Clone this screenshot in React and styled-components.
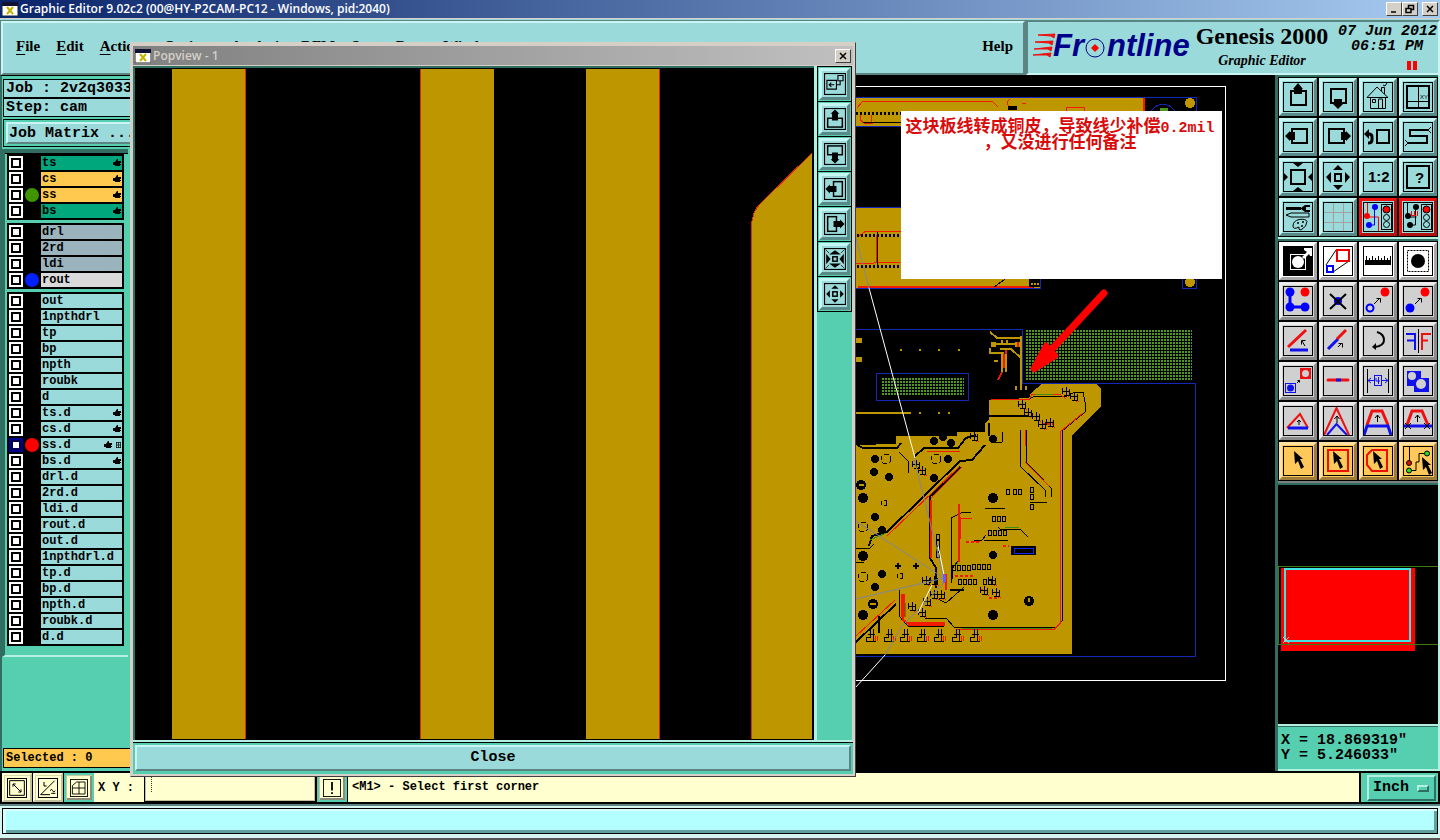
import React from 'react'
import styled, { createGlobalStyle, css } from 'styled-components'

const aqua = '#9bdada'
const teal = '#55cfb0'
const darkTeal = '#2f6e60'
const paleTeal = '#b4f0e2'
const copper = '#bd9600'
const mono = '"Liberation Mono", monospace'
const serif = '"Liberation Serif", serif'
const sans = '"Open Sans", sans-serif'

const GlobalStyle = createGlobalStyle`
  * { box-sizing: border-box; }
  body { margin: 0; background: #000; color: #000; font-family: ${mono}; }
  button, input, select { font: inherit; color: inherit; margin: 0; padding: 0; border-radius: 0; }
  svg { display: block; }
`

/* ---------- icons, all on a 30 x 30 grid ---------- */

const Arrow = ({ d, head }) => (
  <g stroke="#000" strokeWidth="1" fill="none"><path d={d} /><path d={head} /></g>
)

const Cursor = ({ x = 0, y = 0 }) => (
  <polygon transform={`translate(${x} ${y})`} points="11,5 20,13 17,13 21,21 18,23 15,15 12,18" fill="#000" />
)

const Light = () => (
  <g fill="none" stroke="#000">
    <rect x="18.5" y="2.5" width="10" height="25" fill="#9bdada" />
    <circle cx="23.5" cy="7.5" r="3.5" fill="#f00" />
    <circle cx="23.5" cy="15.5" r="3" fill="#9bdada" />
    <circle cx="23.5" cy="22.5" r="3" fill="#9bdada" />
  </g>
)

const box = (x, y, w, h, c = '#000', s = 2) => (
  <rect x={x} y={y} width={w} height={h} fill="none" stroke={c} strokeWidth={s} />
)

const icons = {
  up: <>{box(8, 9, 15, 14)}<path d="M15 1l5 6h-1v5h-8V7h-1z" /></>,
  down: <>{box(8, 7, 15, 14)}<path d="M15 27l-5-5h1v-5h8v5h1z" /></>,
  left: <>{box(9, 7, 15, 14)}<path d="M2 14l5-5v1h5v8H7v1z" /></>,
  right: <>{box(6, 7, 15, 14)}<path d="M28 14l-5-5v1h-5v8h5v1z" /></>,
  home: <g fill="none" stroke="#000"><path d="M4 15.5L14 5l11 10.5zM7.500 15v11.500h15V15M15.500 26v-9h4v9M9.500 17.500h3v3h-3zM18.500 9V5.500h3V12M20 3l2 1 2-3" /></g>,
  xy: <>{box(4, 4, 22, 22)}<path d="M15.500 4v22M4 19.500h22" stroke="#000" fill="none" /><text x="17" y="17" fontSize="6" fontFamily="Liberation Sans">XY</text></>,
  back: <>{box(14, 8, 12, 13)}<path d="M4 12h2q3 0 3 3v3q0 3-4 3" fill="none" stroke="#000" strokeWidth="3" /><path d="M1 12l5-5v10z" /></>,
  snake: <><path d="M26 8H7v6h17v7H5" fill="none" stroke="#000" strokeWidth="2" /><path d="M28 5l-3 3 3 3M2 18l3 3-3 3" fill="none" stroke="#000" /></>,
  zoomIn: <>{box(8, 8, 14, 14)}<path d="M10 1h10l-5 4zM10 29h10l-5-4zM0 10v10l5-5zM30 10v10l-5-5z" /></>,
  zoomOut: <>{box(12, 12, 6, 7)}<path d="M10 8h10l-5-5zM10 23h10l-5 5zM8 10v11l-5-6zM22 10v11l5-6z" /></>,
  ratio: <text x="5" y="20" fontSize="15" fontWeight="bold" fontFamily="Liberation Sans">1:2</text>,
  help: <>{box(4, 4, 22, 22)}<text x="12" y="21" fontSize="15" fontWeight="bold" fontFamily="Liberation Sans">?</text></>,
  tools: <><path d="M3 13l5-2h18v4H8z" fill="none" stroke="#000" /><path d="M3 5h15v3H3zM27 3l-5 0-4 3v1l4 3h5V8h-4V5h4z" /><path d="M10 24q0-5 6-6.500 7-1 8 2 0 5-6 8.500-3 0-2-3-6 3-6-1z" fill="none" stroke="#000" /><circle cx="15" cy="21" r="1" /><circle cx="20" cy="20" r="1" /><circle cx="19" cy="24" r="1" /></>,
  grid: <path d="M10.500 1v28M20.500 1v28M1 10.500h28M1 20.500h28" stroke="#a4a0a0" fill="none" />,
  netA: <><path d="M4.500 1v14h11v15" stroke="#f00" fill="none" /><path d="M11.500 5v18H6" stroke="#00f" fill="none" /><circle cx="12" cy="5" r="3" fill="#00f" /><circle cx="6" cy="23" r="3" fill="#00f" /><circle cx="4" cy="14" r="3" fill="#f00" /><Light /></>,
  netB: <><path d="M4.500 1v14h9M12.500 5v18H6" stroke="#000" fill="none" /><path d="M7 13.500h6M8.500 9v5M11.500 9v5M14.500 9v5" stroke="#f00" /><circle cx="13" cy="5" r="3" /><circle cx="7" cy="23" r="3" /><circle cx="5" cy="14" r="3" /><Light /></>,
  invert: <><rect width="30" height="30" />{box(7.500, 8.500, 15, 15, '#fff', 1)}<circle cx="15" cy="16" r="6" fill="#fff" /><path d="M19 11l5-5-3-2V2h9v8h-3l-1-2-5 5z" fill="#fff" /></>,
  scale: <><path d="M3 19L13 4M10 26l16-11" stroke="#000" />{box(14, 4, 12, 11, '#e00', 2)}{box(4, 20, 6, 6, '#00f', 2)}</>,
  ruler: <><rect x="2" y="14" width="26" height="5" /><path d="M3.500 10v5M6.500 12v3M9.500 10v5M12.500 12v3M15.500 10v5M18.500 12v3M21.500 10v5M24.500 12v3M27.500 10v5" stroke="#000" /></>,
  dot: <><rect x="4.500" y="4.500" width="21" height="21" fill="none" stroke="#000" strokeDasharray="2 1" /><circle cx="15" cy="15" r="7" /></>,
  chain: <><path d="M7 6v15h15" stroke="#00f" strokeWidth="3" fill="none" /><g fill="#00f"><circle cx="7" cy="6" r="4.500" /><circle cx="7" cy="21" r="4.500" /><circle cx="22" cy="21" r="4.500" /></g><circle cx="22" cy="6" r="4.500" fill="#f00" /></>,
  remove: <><circle cx="15" cy="15" r="4" fill="#00f" /><path d="M7 8l16 15M23 8L7 23" stroke="#000" strokeWidth="2" /></>,
  copy: <><circle cx="22" cy="6" r="4.500" fill="#f00" /><circle cx="7" cy="22" r="3.500" fill="none" stroke="#00f" strokeWidth="2" /><Arrow d="M11 18l6-6" head="M13.500 12.500h4v4" /></>,
  move: <><circle cx="22" cy="6" r="4.500" fill="#f00" /><circle cx="7" cy="22" r="4.500" fill="#00f" /><Arrow d="M12 18l6-6" head="M14.500 12.500h4v4" /></>,
  angle: <><path d="M5 21L23 4" stroke="#e11" strokeWidth="3" /><path d="M7 24h18" stroke="#11e" strokeWidth="3" /><Arrow d="M22 20l-3-5" head="M18.500 18.500v-4h4" /></>,
  stretch: <><path d="M5 23l10-10" stroke="#11e" strokeWidth="3" /><path d="M14 13l9-9" stroke="#e11" strokeWidth="3" /><Arrow d="M15 21l4-4" head="M15.500 17.500h4v4" /></>,
  rotate: <><path d="M14 6q7 2 7 8t-9 7" stroke="#000" strokeWidth="2" fill="none" /><path d="M9 21l4-4v7z" /></>,
  mirror: <><path d="M3 8h9v16M4 14.500h8" stroke="#11e" strokeWidth="2" fill="none" /><path d="M15.500 3v24" stroke="#000" /><path d="M19 24V8h9M19 14.500h6" stroke="#e11" strokeWidth="2" fill="none" /></>,
  paste: <><rect x="17" y="2" width="11" height="11" fill="#e11" /><circle cx="22.500" cy="7.500" r="3.500" fill="#d0d0d0" />{box(2.500, 17.500, 10, 9, '#11e', 1)}<circle cx="7.500" cy="22" r="3.500" fill="#11e" /><Arrow d="M14 17l3-3" head="M14.500 14.500h2v2" /></>,
  segment: <><path d="M5 14h20" stroke="#e11" strokeWidth="3" strokeLinecap="round" /><path d="M13 14h5" stroke="#11e" strokeWidth="3" /></>,
  spacing: <><path d="M4.500 3v24M25.500 3v24" stroke="#000" /><g stroke="#11e" fill="none"><path d="M5 14.500h6M19 14.500h6M8 12l-3 2.500L8 17M22 12l3 2.500L22 17" /><rect x="11.500" y="9.500" width="7" height="10" /><path d="M13 12v3h4M15.500 11v7" /></g></>,
  merge: <><path d="M4 5h14v7h8v14H11v-6H4z" fill="#11e" /><circle cx="9" cy="10" r="4" fill="#d0d0d0" /><circle cx="18" cy="18" r="5" fill="#d0d0d0" /></>,
  triangle: <><path d="M4 22L17 8l8 14" stroke="#e11" strokeWidth="2" fill="none" /><path d="M5 22h20" stroke="#11e" strokeWidth="3" /><Arrow d="M16 19v-5" head="M14 16l2-2 2 2" /></>,
  peak: <><path d="M1 29L13.500 2 26 29" stroke="#e11" strokeWidth="2" fill="none" /><path d="M4 29l9.500-11L24 29" stroke="#11e" strokeWidth="2" fill="none" /><Arrow d="M14 17v-7" head="M11.500 13l2.500-3 2.500 3" /></>,
  trapezoid: <><path d="M4 19L9 5h10l6 14" stroke="#e11" strokeWidth="3" fill="none" /><path d="M1 29l3-9h21l3 9" stroke="#11e" strokeWidth="3" fill="none" /><Arrow d="M14.500 16V9" head="M12 12l2.500-3 2.500 3" /></>,
  trapezoidCut: <><path d="M4 19L9 5h10l6 14" stroke="#e11" strokeWidth="3" fill="none" /><path d="M0 20h30" stroke="#11e" strokeWidth="3" /><path d="M2 17l6 6M8 17l-6 6M21 17l6 6M27 17l-6 6" stroke="#000" /><Arrow d="M14.500 16V9" head="M12 12l2.500-3 2.500 3" /></>,
  select: <Cursor />,
  selectBox: <>{box(5, 4, 20, 21, '#e10', 2)}<Cursor x={-1} /></>,
  selectPoly: <><path d="M9 4h15v21H9l-5-6v-10z" fill="none" stroke="#e10" strokeWidth="2" /><Cursor x={-1} /></>,
  selectNet: <><path d="M6.500 1v15M6 24.500h7V16h3V7.500h7" stroke="#000" fill="none" /><g stroke="#000"><circle cx="6" cy="17" r="2.500" fill="#d10" /><circle cx="6" cy="24.500" r="2.500" fill="#2d2" /><circle cx="24" cy="7.500" r="2.500" fill="#2d2" /></g><Cursor x={8} y={6} /></>,
  popview: <><path d="M4 10h13v12H4zM19 3.500h7v7h-7zM14 16H7M10 13l-3 3 3 3M17 16h5v-5" fill="none" stroke="#000" strokeWidth="1.500" /></>,
  popUp: <>{box(5, 14, 20, 12)}<path d="M15 2l6 6h-2v9h-8V8H9z" /></>,
  popDown: <>{box(5, 4, 20, 12)}<path d="M15 28l-6-6h2v-9h8v9h2z" /></>,
  popLeft: <>{box(13, 5, 12, 20)}<path d="M2 15l6-6v2h9v8H8v2z" /></>,
  popRight: <>{box(5, 5, 12, 20)}<path d="M28 15l-6-6v2h-9v8h9v2z" /></>,
  popIn: <>{box(12, 12, 6, 6)}<path d="M7 9l8-6 8 6zM7 21l8 6 8-6zM3 8l6 7-6 7zM27 8l-6 7 6 7z" /><path d="M2 2l5 5M28 2l-5 5M2 28l5-5M28 28l-5-5" stroke="#000" /></>,
  popOut: <>{box(12, 12, 6, 6)}<path d="M10 8l5-5 5 5zM10 22l5 5 5-5zM8 10l-5 5 5 5zM22 10l5 5-5 5z" /></>,
  resize: <path d="M4 4h22v22H4zM9 9l12 12M9 13V9h4M21 17v4h-4" stroke="#000" fill="none" strokeWidth="1.500" />,
  slope: <path d="M4 25L25 4M4 25h14M9 6v6h4M18 19q3-4 4 0t4 0M20 23h6" stroke="#000" fill="none" strokeWidth="1.500" />,
  snap: <path d="M4 25V11l7-6h14v20zM4 15h21M15 5v20" stroke="#000" fill="none" strokeWidth="1.500" />,
  alert: <path d="M15 5v14M15 22v3" stroke="#000" strokeWidth="3" />,
}

function Icon({ name, size = 30 }) {
  return (
    <svg width={size} height={size} viewBox="0 0 30 30" aria-hidden="true">
      {icons[name]}
      <rect x="0.500" y="0.500" width="29" height="29" fill="none" stroke="#000" strokeWidth={size < 30 ? 2 : 1} />
    </svg>
  )
}

const AppIcon = () => (
  <svg width="16" height="14" viewBox="0 0 16 14" aria-hidden="true">
    <rect width="16" height="14" fill="#fff" stroke="#222" />
    <rect width="16" height="4" fill="#113" />
    <path d="M5 5l6 7M11 5l-6 7" stroke="#c3b400" strokeWidth="2" />
  </svg>
)

const bevel = (light, dark, w = 3) => css`
  border: ${w}px solid;
  border-color: ${light} ${dark} ${dark} ${light};
`

/* ---------- frame ---------- */

const Shell = styled.div`
  display: flex;
  flex-direction: column;
  min-height: 100vh;
  position: relative;
  overflow: hidden;
`

const TitleBar = styled.header`
  display: flex;
  align-items: center;
  gap: 2px;
  height: 19px;
  padding: 0 2px;
  background: linear-gradient(to right, #0a246a, #a6caf0);
  border-bottom: 1px solid #d4d0c8;
  color: #fff;
  font: 600 12px/16px ${sans};
`

const TitleText = styled.h1`
  flex: 1;
  margin: 0;
  font: inherit;
  color: ${p => p.$color || '#fff'};
  white-space: nowrap;
`

const WinButton = styled.button`
  display: grid;
  place-items: center;
  width: 16px;
  height: 14px;
  margin-left: ${p => (p.$apart ? '2px' : '-2px')};
  background: #d4d0c8;
  border: 1px solid;
  border-color: #fff #404040 #404040 #fff;
`

const Top = styled.div`
  display: flex;
  height: 56px;
  background: ${aqua};
`

const MenuBar = styled.nav`
  flex: 1;
  display: flex;
  align-items: center;
  gap: 16px;
  margin: 2px 1px 0 1px;
  padding: 0 10px 4px 13px;
  ${bevel('#c9f6f4', '#5c8482', 2)}
  outline: 1px solid #5c8482;
`

const MenuItem = styled.button`
  background: none;
  border: 0;
  font: bold 15px/18px ${serif};
  text-underline-offset: 3px;
  margin-left: ${p => (p.$end ? 'auto' : '0')};
  &::first-letter { text-decoration: ${p => (p.$end ? 'none' : 'underline')}; }
`

const Brand = styled.div`
  display: flex;
  width: 414px;
  margin-top: 1px;
  padding: 0 0 0 4px;
  ${bevel('#5c8482', '#c9f6f4', 2)}
`

const BrandName = styled.div`
  width: 138px;
  text-align: center;
  white-space: nowrap;
  font: bold 24px/28px ${serif};
  small { display: block; font: italic bold 14px/22px ${serif}; }
`

const Clock = styled.time`
  flex: 1;
  text-align: right;
  white-space: nowrap;
  font: italic bold 15px/15px ${mono};
  padding: 2px 1px 0 0;
  span { display: block; }
  span + span { padding-right: 14px; }
`

const Pause = styled.i`
  display: block;
  width: 10px;
  height: 9px;
  margin: 7px 20px 0 auto;
  border: solid #f00;
  border-width: 0 4px;
`

const Main = styled.main`
  flex: 1;
  display: flex;
  background: #000;
`

/* ---------- left side ---------- */

const Sidebar = styled.aside`
  display: flex;
  flex-direction: column;
  width: 136px;
  padding-top: 3px;
  background: ${teal};
  border-left: 2px solid ${darkTeal};
  border-top: 1px solid #000;
  font: bold 15px/17px ${mono};
  white-space: nowrap;
`

const Info = styled.div`
  margin-left: 1px;
  padding-left: 2px;
  border: 1px solid #000;
  background: ${aqua};
  height: 19px;
`

const MatrixBox = styled.div`
  margin: 2px 0 2px 1px;
  padding: 2px;
  border: 1px solid #000;
`

const MatrixButton = styled.button`
  display: block;
  width: 134px;
  height: 22px;
  padding-left: 1px;
  text-align: left;
  background: ${aqua};
  ${bevel('#c9f6f4', '#5c8482', 2)}
`

const Layers = styled.section`
  width: 126px;
  padding: 1px 0 9px 1px;
  border-left: 3px solid ${darkTeal};
  border-top: 4px solid ${darkTeal};
  border-bottom: 2px solid ${paleTeal};
  box-shadow: inset 0 1px #000;
  display: flex;
  flex-direction: column;
  gap: 3px;
  font: bold 12px/14px ${mono};
`

const Group = styled.div`
  width: 117px;
  margin-left: 1px;
  padding: 1px 2px;
  background: #000;
`

const LayerRow = styled.label`
  display: grid;
  grid-template-columns: 14px 18px 1fr;
  align-items: center;
  height: 16px;
  padding: 1px 0;
`

const Tick = styled.input`
  appearance: none;
  width: 14px;
  height: 14px;
  background: #fff;
  border: 2px solid ${p => (p.$active ? '#000090' : '#fff')};
  box-shadow: inset 0 0 0 2px #000;
  &:checked { box-shadow: inset 0 0 0 2px #000050; }
`

const Dot = styled.span`
  justify-self: center;
  width: 14px;
  height: 14px;
  border-radius: 50%;
  background: ${p => p.$color || 'transparent'};
`

const LayerName = styled.span`
  display: flex;
  align-items: center;
  gap: 4px;
  height: 14px;
  padding: 0 1px;
  background: ${p => p.$bg};
  svg { margin-left: auto; }
  svg + svg { margin-left: 0; }
`

const Selected = styled.div`
  margin-top: auto;
  margin-bottom: 3px;
  margin-left: 1px;
  padding-left: 2px;
  border: 1px solid #000;
  background: #ffc84e;
  font: bold 12px/18px ${mono};
`

const kinds = { board: '#00a67c', mask: '#ffc84e', drill: '#9ab3bd', rout: '#dadada', misc: aqua }

const groups = [
  [
    { name: 'ts', kind: 'board', hand: true },
    { name: 'cs', kind: 'mask', hand: true },
    { name: 'ss', kind: 'mask', hand: true, dot: '#3f9500' },
    { name: 'bs', kind: 'board', hand: true },
  ],
  [
    { name: 'drl', kind: 'drill' },
    { name: '2rd', kind: 'drill' },
    { name: 'ldi', kind: 'drill' },
    { name: 'rout', kind: 'rout', dot: '#0020ff' },
  ],
  [
    'out', '1npthdrl', 'tp', 'bp', 'npth', 'roubk', 'd', 'ts.d', 'cs.d', 'ss.d', 'bs.d', 'drl.d', '2rd.d',
    'ldi.d', 'rout.d', 'out.d', '1npthdrl.d', 'tp.d', 'bp.d', 'npth.d', 'roubk.d', 'd.d',
  ].map(name => ({
    name,
    kind: 'misc',
    hand: ['ts.d', 'cs.d', 'ss.d', 'bs.d'].includes(name),
    dot: name === 'ss.d' ? '#f00' : undefined,
    active: name === 'ss.d',
  })),
]

const Hand = () => (
  <svg width="8" height="8" viewBox="0 0 8 8" aria-hidden="true"><path d="M0 3h2l2-3h1v2h3v2H7v1h1v1H7v1H2V6H0z" /></svg>
)

function Layer({ layer }) {
  return (
    <LayerRow>
      <Tick type="checkbox" $active={layer.active} defaultChecked={layer.active} />
      <Dot $color={layer.dot} />
      <LayerName $bg={kinds[layer.kind]}>
        {layer.name}
        {layer.hand && <Hand />}
        {layer.active && (
          <svg width="5" height="6" viewBox="0 0 5 6" aria-hidden="true">
            <path d="M0 .5h5M0 3h5M0 5.500h5M.5 0v6M2.500 0v6M4.500 0v6" stroke="#000" strokeWidth="0.700" />
          </svg>
        )}
      </LayerName>
    </LayerRow>
  )
}

/* ---------- drawing area ---------- */

const Canvas = styled.section`
  flex: 1;
  position: relative;
  display: flex;
  justify-content: flex-end;
  overflow: hidden;
`

const Note = styled.p`
  position: absolute;
  top: 36px;
  right: 53px;
  width: 321px;
  height: 168px;
  margin: 0;
  padding: 6px 3px 0 0;
  background: #fff;
  color: #d80c0c;
  text-align: center;
  white-space: nowrap;
  font: bold 17px/16px "Noto Sans CJK SC", sans-serif;
  span { font: bold 15px/1px ${mono}; }
`

const vias = [
  [934, 441, 4], [943, 437, 4], [951, 443, 4], [875, 459, 4], [948, 459, 4], [874, 472, 4], [889, 477, 4], [934, 478, 4],
  [861, 485, 5], [863, 498, 5], [875, 517, 4], [882, 530, 4], [863, 556, 5], [882, 574, 4], [875, 587, 4], [873, 604, 5],
  [863, 615, 5], [993, 439, 4], [993, 498, 5], [993, 555, 4], [993, 615, 5], [1029, 601, 5],
]
const rings = [[886, 459, 5], [936, 459, 5], [863, 527, 5], [884, 503, 3], [863, 577, 5], [900, 576, 3]]
const holes = [
  [994, 519], [999, 519], [1004, 519], [990, 533], [995, 533], [1000, 533], [1005, 533], [974, 567], [979, 567], [984, 567],
  [989, 567], [960, 582], [965, 582], [970, 582], [975, 582], [985, 582], [990, 582], [938, 537], [938, 543], [938, 549],
  [938, 555], [954, 568], [959, 568], [964, 568], [969, 568], [1008, 492], [1015, 492], [1020, 492], [1032, 490], [1032, 497], [1032, 507],
]
const clusters = [
  [1022, 404], [1028, 412], [1036, 416], [1042, 424], [1050, 422], [1066, 391], [1074, 396], [974, 436], [922, 470], [916, 464],
  [927, 601], [934, 594], [922, 612], [912, 606], [934, 580], [926, 580], [984, 590], [992, 580], [996, 592], [941, 594],
]

function Board() {
  return (
    <svg width="420" height="696" viewBox="855 75 420 696" shapeRendering="crispEdges" role="img" aria-label="Board layout">
      <defs>
        <pattern id="mesh" width="3" height="3" patternUnits="userSpaceOnUse">
          <rect width="2" height="2" fill="#4f981c" />
        </pattern>
      </defs>
      <path d="M856 86.500h369.500v594H856" fill="none" stroke="#fff" />

      <g fill={copper}>
        <rect x="856" y="98" width="288" height="28" />
        <rect x="856" y="208" width="184" height="80" />
        <circle cx="1190" cy="103" r="5" />
        <circle cx="1190" cy="282" r="5" />
        <path d="M856 445l40-1v-8h61v-4h28v-9l4-3v-20l40-2 2-5 12-10h52l6 6v17l-29 29v219H856z" />
        <path d="M856 338h6v5h-6zM856 357h6v5h-6zM856 412h55v2h-55z" />
        <path d="M900 349h2v2h-2zM919 349h2v2h-2zM938 349h2v2h-2zM958 349h2v2h-2zM919 412h2v2h-2zM938 412h2v2h-2zM948 412h2v2h-2z" />
        <path d="M1020 336h2v54h-2zM1015 386h2v4h-2zM1025 386h2v4h-2zM991 342h5v5h-5zM1015 342h5v5h-5z" />
      </g>
      <g fill="none" stroke={copper} strokeWidth="2">
        <path d="M990 332l7 6h24M991 344h28M990 348v5h14M1000 349h11l10 9M1002 352v20l-4 8M1006 350v22M1002 340v4M1007 340v4M994 361h4" />
      </g>
      <path d="M1144 98v28M1004 354v14M1018 342v5M1006 350v4M1002 372l-4 8M858 287h176" stroke="#f21b00" strokeWidth="2" />

      <g fill="none" stroke="#1428b8">
        <path d="M856 97.500h340.500v29H856M856 207.500h184.500v81H856M1182.500 278v10.500h14V278" />
        <path d="M856 329.500h166.500v54h173v273H856" />
        <rect x="876.500" y="373.500" width="92" height="27" />
        <path d="M1150 112q13-16 26 0" />
      </g>
      <rect x="1026" y="330" width="166" height="51" fill="url(#mesh)" />
      <rect x="881" y="378" width="83" height="17" fill="url(#mesh)" />

      {/* top strips */}
      <g fill="none" stroke="#f21b00">
        <path d="M857 108l6-7h129l6 6M860 112v8l4 3h8l-1-8M1010 99q-6 4 0 8M1066 111v-4h18v4M1022 103h4M858 237l8-6h36M856 263h18l6-1M880 262h20M876 235v27" />
      </g>
      <path d="M856 113h46M857 235h44M857 266h44" stroke="#000" strokeWidth="3" strokeDasharray="2 2" />
      <path d="M877.500 232v34M863 122.500h38M994 287l14-10M1033 288v-10h8" stroke="#000" fill="none" />
      <rect x="1008" y="106" width="9" height="4" />
      <rect x="1029" y="279" width="11" height="8" />
      <path d="M1031 284h8" stroke={copper} strokeDasharray="2 1" strokeWidth="2" />
      <path d="M1160 108h8v3h-8z" fill="#4f981c" />

      {/* traces */}
      <g fill="none" stroke="#000">
        <path d="M857 445l6 3h34l4-5M915 456l9-8h34l8-10 10-3M985 422l3-6h40M985 445l-13 15-12 1-73 71-15 4-3 10M931 496l29-29M960 467l-30 29v62l6 10v20M989 423v13" strokeWidth="2" />
        <path d="M1020 430v36l25 24v7M1026 430v32l25 26v9M899 452l9 9v12M1002 432v10l-7 1M951 583v-65l12-6h8M958 509v52l-6 8v10M985 508h20M974 540h8l4-5M984 540h24M998 527l2 2h20l8 8M1030 502h17M856 548h14l4-4M856 562h8" />
        <path d="M989 399h40l6-3h20M1055 396h12l8-4h8l2 10v10l-23 19v190l-6 6H954l-8-9H925M899 590v26l9 10h36M936 598l10 5 18-16" />
        <path d="M896 604l-40 38M879 616v17M950 590h14M895 566h6M898 563v6M916 563v6M913 566h6" strokeWidth="2" />
        <path d="M1012 547h23v7h-23z" fill="#000" strokeWidth="2" />
      </g>
      <g fill="none" stroke="#f21b00">
        <path d="M991 399.500h38l3-5h28l6 4M1060.500 431v192l-6 6H956M1061 431l22-18M887 536l72-69M931 498l31-31M927 451h33M1025 462l24 24M1025 430v16M960 518h12M856 636l39-36M974 541h6" />
        <path d="M930.500 500v58M959 504v58M960 517v22M946 574v16M903 594v26l6 4h36" strokeWidth="2" />
        <rect x="901" y="594" width="3" height="22" fill="#f21b00" />
        <rect x="908" y="622" width="36" height="3" fill="#f21b00" />
        <path d="M955 576h18M966 542h14M1003 546h6M1042 424h12M980 590h4M989 598h8" strokeWidth="2" strokeDasharray="3 2" />
      </g>
      <path d="M962 628h90M870 540l16-7M905 603v14M957 562v10M1035 394h18M1005 527h14" stroke="#3f8f10" />
      <rect x="1014.500" y="548.500" width="19" height="5" fill="#000" stroke="#1428e8" />

      <g>{vias.map(([x, y, r]) => <circle key={`${x}-${y}`} cx={x} cy={y} r={r} />)}</g>
      <path d="M859 485h5M870 604h6M1029 598v4" stroke={copper} strokeWidth="2" />
      <g fill="none" stroke="#000">
        {rings.map(([x, y, r]) => <circle key={`${x}-${y}`} cx={x} cy={y} r={r} strokeDasharray="5 2" />)}
        {holes.map(([x, y]) => <rect key={`${x}-${y}`} x={x - 1.5} y={y - 2.5} width="3" height="5" rx="1" />)}
      </g>
      {clusters.map(([x, y]) => (
        <g key={`${x}-${y}`} fill="none">
          <path d={`M${x - 4} ${y}h8M${x} ${y - 4}v8M${x - 4} ${y - 3}v6M${x + 3} ${y - 2}v6h-5`} stroke="#000" />
          <path d={`M${x + 2} ${y + 5}h4`} stroke="#f21b00" strokeDasharray="1 1" />
        </g>
      ))}
      {[870, 888, 904, 921, 938, 956, 974].map(x => (
        <g key={x} fill="none">
          <path d={`M${x} 629v8h-4v4h10M${x + 3} 629v12M${x - 2} 634h7`} stroke="#000" />
          <path d={`M${x + 5} 636v5M${x + 7} 636v5`} stroke="#f21b00" />
        </g>
      ))}

      {/* rubber lines to the popview frame */}
      <g fill="none" shapeRendering="auto">
        <path d="M856 238l13 50M856 521l88 57-88 21M914 458l31 124-43 44M902 626l-17 29" stroke="#8086a0" />
        <path d="M869 288l46 170M885 655l-29 32M938 545l6 30M932 585l-14 28" stroke="#fff" />
        <path d="M944 574v9M945 575v7" stroke="#6a5cff" strokeWidth="2" />
      </g>
      <g fill="#f00" shapeRendering="auto">
        <path d="M1104 293l-50 54" stroke="#f00" strokeWidth="7" strokeLinecap="round" />
        <path d="M1033 369l13-24 10 11-22 14z" stroke="#f00" strokeWidth="5" strokeLinejoin="round" />
      </g>
    </svg>
  )
}

/* ---------- right side ---------- */

const Right = styled.aside`
  display: flex;
  flex-direction: column;
  width: 165px;
  border-left: 3px solid ${darkTeal};
  border-right: 2px solid ${paleTeal};
`

const Tools = styled.div`
  display: grid;
  grid-template-columns: repeat(4, 38px);
  gap: 2px;
  padding: 1px;
  border-top: 2px solid ${darkTeal};
  border-bottom: 2px solid ${p => p.$edge};
`

const skins = {
  aqua: [aqua, '#c5f6f4', '#5a8a88'],
  alarm: [aqua, '#f01010', '#b01010'],
  white: ['#fff', '#fff', '#a8a8a8'],
  grey: ['#d0d0d0', '#ececec', '#8c8c8c'],
  gold: ['#ffc85a', '#ffe0a0', '#a07c38'],
}

const Tool = styled.button`
  display: grid;
  place-items: center;
  width: 38px;
  height: 38px;
  background: ${p => skins[p.$skin][0]};
  border: 3px solid;
  border-color: ${p => { const [, l, d] = skins[p.$skin]; return `${l} ${d} ${d} ${l}` }};
`

const viewTools = [
  ['up', 'Pan up'], ['down', 'Pan down'], ['home', 'Home'], ['xy', 'Pan XY'],
  ['left', 'Pan left'], ['right', 'Pan right'], ['back', 'Previous view'], ['snake', 'Serpentine'],
  ['zoomIn', 'Zoom in'], ['zoomOut', 'Zoom out'], ['ratio', 'Zoom 1:2'], ['help', 'Info'],
  ['tools', 'Setup'], ['grid', 'Grid'], ['netA', 'Net check', 'alarm'], ['netB', 'Drc check', 'alarm'],
]

const editTools = [
  ['invert', 'Invert', 'white'], ['scale', 'Scale', 'white'], ['ruler', 'Measure', 'white'], ['dot', 'Feature', 'white'],
  ['chain', 'Chain'], ['remove', 'Delete'], ['copy', 'Copy'], ['move', 'Move'],
  ['angle', 'Angle'], ['stretch', 'Stretch'], ['rotate', 'Rotate'], ['mirror', 'Mirror'],
  ['paste', 'Change symbol'], ['segment', 'Break'], ['spacing', 'Spacing'], ['merge', 'Merge'],
  ['triangle', 'Move corner'], ['peak', 'Move peak'], ['trapezoid', 'Move segment'], ['trapezoidCut', 'Cut segment'],
  ['select', 'Select', 'gold'], ['selectBox', 'Select frame', 'gold'], ['selectPoly', 'Select polygon', 'gold'], ['selectNet', 'Select net', 'gold'],
]

const Preview = styled.div`
  flex: 1;
  display: flex;
  align-items: center;
  border-top: 2px solid ${darkTeal};
  border-bottom: 2px solid ${paleTeal};
`

const Coords = styled.output`
  display: block;
  height: 45px;
  padding: 6px 3px;
  background: ${teal};
  border-top: 1px solid ${darkTeal};
  border-bottom: 2px solid ${paleTeal};
  font: bold 15px/15px ${mono};
  white-space: pre;
`

/* ---------- bottom ---------- */

const Prompt = styled.footer`
  display: flex;
  align-items: stretch;
  height: 33px;
  padding: 2px 2px 2px 2px;
  gap: 1px;
  background: #000;
  font: bold 12px/16px ${mono};
`

const SmallTool = styled.button`
  display: grid;
  place-items: center;
  width: 30px;
  background: #ffffd0;
  border: 2px solid;
  border-color: ${p => (p.$lit ? teal : '#ffffd0 #c0c09a #c0c09a #ffffd0')};
  box-shadow: ${p => (p.$lit ? 'inset 1px 1px #c8c8a0, inset -2px -2px #8c8c78' : 'inset 1px 1px #d8d8ac')};
`

const XYField = styled.label`
  display: flex;
  align-items: center;
  background: #ffffd0;
  padding-left: 4px;
  margin-left: -1px;
  gap: 10px;
  white-space: nowrap;
`

const XYInput = styled.input`
  width: 172px;
  height: 29px;
  padding: 0 6px;
  background: repeating-linear-gradient(#333 0 1px, transparent 1px 2px) 5px 2px / 1px 16px no-repeat #ffffd0;
  ${bevel('#c0c09a', '#c0c09a', 2)}
  outline: 1px solid #000;
  outline-offset: -1px;
`

const Message = styled.div`
  flex: 1;
  padding: 6px 4px;
  background: #ffffd0;
`

const UnitBox = styled.label`
  position: relative;
  width: 77px;
  margin-left: 1px;
  padding: 2px 2px 2px 6px;
  background: ${teal};
`

const UnitSelect = styled.select`
  appearance: none;
  width: 69px;
  height: 26px;
  padding-left: 4px;
  background: ${teal};
  ${bevel(paleTeal, darkTeal, 2)}
  font: bold 15px/18px ${mono};
`

const UnitMark = styled.i`
  position: absolute;
  right: 9px;
  top: 12px;
  width: 12px;
  height: 7px;
  pointer-events: none;
  ${bevel(paleTeal, darkTeal, 2)}
`

const Status = styled.div`
  height: 36px;
  padding: 2px 2px 4px;
  background: #d6f4f0;
  border-top: 2px solid #5c8482;
  border-bottom: 2px solid #555;
  div {
    height: 100%;
    background: #b3ffff;
    border: 1px solid #000;
    box-shadow: inset 3px 2px #d8ffff, inset -3px -3px #62a09e;
  }
`

/* ---------- popview window ---------- */

const Popup = styled.section`
  position: absolute;
  left: 130px;
  top: 42px;
  width: 726px;
  padding: 2px;
  background: ${teal};
  border: 1px solid;
  border-color: #d4d0c8 #404040 #404040 #d4d0c8;
  box-shadow: inset 0 0 0 2px #d4d0c8;
`

const PopupTitle = styled.div`
  display: flex;
  align-items: center;
  gap: 2px;
  height: 20px;
  padding: 0 2px;
  background: linear-gradient(to right, #808080, #c0c0c0);
  border-top: 1px solid #d4d0c8;
  font: 600 12px/16px ${sans};
`

const PopupBody = styled.div`
  display: flex;
  border: solid #d4d0c8;
  border-width: 1px 0 0;
`

const PopupView = styled.div`
  flex: 1;
  background: #000;
  border: solid ${darkTeal};
  border-width: 2px 0 0 2px;
  overflow: hidden;
`

const PopupTools = styled.div`
  width: 39px;
  border-left: 3px solid ${paleTeal};
  border-right: 1px solid #d4d0c8;
  background: ${teal};
`

const PopupSlot = styled.div`
  height: 35px;
  padding: 1px;
  border: solid #000;
  border-width: 1px 1px 0 1px;
  &:last-child { border-bottom-width: 1px; height: 36px; }
`

const PopupTool = styled.button`
  display: grid;
  place-items: center;
  width: 31px;
  height: 32px;
  background: ${aqua};
  ${bevel('#c5f6f4', '#5a8a88', 3)}
`

const CloseRow = styled.div`
  padding: 3px 2px;
  border-top: 2px solid ${paleTeal};
  box-shadow: inset 0 1px #000;
`

const CloseButton = styled.button`
  display: block;
  width: 100%;
  height: 26px;
  background: ${aqua};
  ${bevel('#c9f6f4', '#5c8482', 2)}
  font: bold 15px/18px ${mono};
`

const popTools = [
  ['popview', 'Popview'], ['popUp', 'Up'], ['popDown', 'Down'], ['popLeft', 'Left'], ['popRight', 'Right'],
  ['popIn', 'Zoom in'], ['popOut', 'Zoom out'],
]

function Popview() {
  return (
    <Popup>
      <PopupTitle>
        <AppIcon />
        <TitleText as="h2" $color="#d4d0c8">Popview - 1</TitleText>
        <WinButton aria-label="Close window"><Glyph d="M2 2l6 6M8 2L2 8" /></WinButton>
      </PopupTitle>
      <PopupBody>
        <PopupView>
          <svg width="677" height="672" viewBox="135 68 677 672" shapeRendering="crispEdges" role="img" aria-label="Enlarged traces">
            <g fill={copper}>
              <rect x="172" y="69" width="73" height="670" />
              <rect x="421" y="69" width="73" height="670" />
              <rect x="586" y="69" width="73" height="670" />
              <path d="M812 153l-51 50q-9 9-9 24v512h60z" />
            </g>
            <path d="M245.500 69v670M420.500 69v670M659.500 69v670M812 153l-51 50q-9.500 9-9.500 24v512" fill="none" stroke="#e02a10" />
          </svg>
        </PopupView>
        <PopupTools>
          {popTools.map(([name, label]) => (
            <PopupSlot key={name}>
              <PopupTool aria-label={label}><Icon name={name} size={22} /></PopupTool>
            </PopupSlot>
          ))}
        </PopupTools>
      </PopupBody>
      <CloseRow><CloseButton>Close</CloseButton></CloseRow>
    </Popup>
  )
}

const Glyph = ({ d }) => (
  <svg width="10" height="10" viewBox="0 0 10 10" aria-hidden="true"><path d={d} stroke="#000" strokeWidth="1.500" fill="none" /></svg>
)

const Logo = () => (
  <svg width="161" height="40" viewBox="1032 23 161 40" role="img" aria-label="Frontline">
    <path d="M1038 36l17-1-1 4-3-2zM1035 43l18-1-1 4-3-2zM1034 50l18-2-1 4-3-2zM1033 56l18-2-1 4-3-2z" fill="#e11" stroke="#e11" />
    <g fill="#000088" fontFamily="Liberation Sans" fontWeight="bold" fontStyle="italic" fontSize="31">
      <text x="1053" y="57">Fr</text>
      <text x="1107" y="57">ntline</text>
    </g>
    <circle cx="1095" cy="49" r="9" fill={aqua} stroke="#000088" strokeWidth="1" />
    <path d="M1095 45l4 4-4 4-4-4z" fill="#f00" />
  </svg>
)

const menus = ['File', 'Edit', 'Actions', 'Options', 'Analysis', 'DFM', 'Step', 'Rout', 'Windows']

export default function App() {
  return (
    <Shell>
      <GlobalStyle />
      <TitleBar>
        <AppIcon />
        <TitleText>Graphic Editor 9.02c2 (00@HY-P2CAM-PC12 - Windows, pid:2040)</TitleText>
        <WinButton aria-label="Minimize"><Glyph d="M2 8h5" /></WinButton>
        <WinButton aria-label="Restore"><Glyph d="M1 4.500h5v4H1zM3.500 4V1.500h5v4H6" /></WinButton>
        <WinButton $apart aria-label="Close"><Glyph d="M2 2l6 6M8 2L2 8" /></WinButton>
      </TitleBar>

      <Top>
        <MenuBar>
          {menus.map(m => <MenuItem key={m}>{m}</MenuItem>)}
          <MenuItem $end>Help</MenuItem>
        </MenuBar>
        <Brand>
          <Logo />
          <BrandName>Genesis 2000<small>Graphic Editor</small></BrandName>
          <Clock><span>07 Jun 2012</span><span>06:51 PM</span><Pause /></Clock>
        </Brand>
      </Top>

      <Main>
        <Sidebar>
          <Info>Job : 2v2q3033</Info>
          <Info>Step: cam</Info>
          <MatrixBox><MatrixButton>Job Matrix ...</MatrixButton></MatrixBox>
          <Layers>
            {groups.map((group, i) => (
              <Group key={i}>{group.map(l => <Layer key={l.name} layer={l} />)}</Group>
            ))}
          </Layers>
          <Selected>Selected : 0</Selected>
        </Sidebar>

        <Canvas>
          <Board />
          <Note>这块板线转成铜皮，导致线少补偿<span>0.2mil</span><br />，又没进行任何备注</Note>
        </Canvas>

        <Right>
          <Tools $edge={paleTeal}>
            {viewTools.map(([name, label, skin]) => (
              <Tool key={name} $skin={skin || 'aqua'} aria-label={label}><Icon name={name} /></Tool>
            ))}
          </Tools>
          <Tools $edge="#808080">
            {editTools.map(([name, label, skin]) => (
              <Tool key={name} $skin={skin || 'grey'} aria-label={label}><Icon name={name} /></Tool>
            ))}
          </Tools>
          <Preview>
            <svg width="160" height="238" viewBox="1278 486 160 238" shapeRendering="crispEdges" role="img" aria-label="Overview">
              <rect x="1281" y="568" width="134" height="83" fill="#f00" />
              <path d="M1438 566.500h-159.500v78H1438" fill="none" stroke="#3f7a10" />
              <rect x="1285" y="569" width="125" height="72" fill="none" stroke="#40e4e4" strokeWidth="2" />
              <path d="M1283 637l6 6M1289 637l-6 6" stroke="#b0d8d8" />
            </svg>
          </Preview>
          <Coords>{'X = 18.869319"\nY = 5.246033"'}</Coords>
        </Right>
      </Main>

      <Prompt>
        <SmallTool aria-label="Window mode"><Icon name="resize" size={20} /></SmallTool>
        <SmallTool aria-label="Angle mode"><Icon name="slope" size={20} /></SmallTool>
        <SmallTool $lit aria-label="Snap mode"><Icon name="snap" size={18} /></SmallTool>
        <XYField>X Y :<XYInput type="text" defaultValue="" /></XYField>
        <SmallTool $lit aria-label="Alert"><Icon name="alert" size={18} /></SmallTool>
        <Message>&lt;M1&gt; - Select first corner</Message>
        <UnitBox>
          <UnitSelect aria-label="Units" defaultValue="Inch"><option>Inch</option><option>MM</option></UnitSelect>
          <UnitMark />
        </UnitBox>
      </Prompt>
      <Status><div /></Status>

      <Popview />
    </Shell>
  )
}
